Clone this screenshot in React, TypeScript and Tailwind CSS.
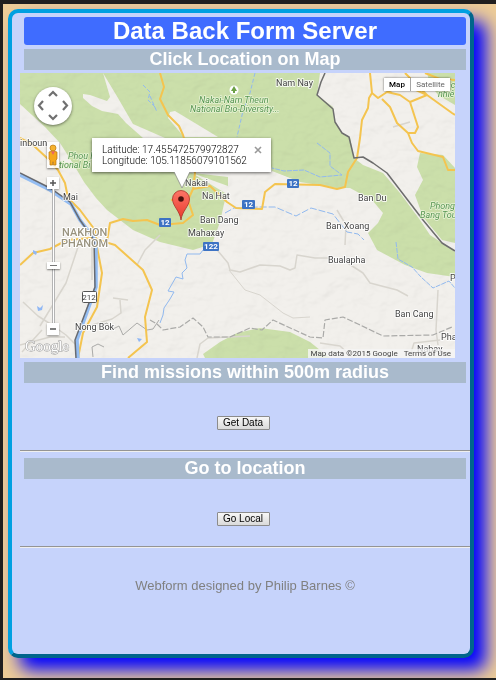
import type { ReactNode } from "react";

const places: { name: string; x: number; y: number }[] = [
  { name: "Nam Nay", x: 276, y: 86 },
  { name: "inboun", x: 20, y: 146 },
  { name: "Mai", x: 63, y: 200 },
  { name: "Nakai", x: 185, y: 186 },
  { name: "Na Hat", x: 202, y: 199 },
  { name: "Ban Dang", x: 200, y: 223 },
  { name: "Mahaxay", x: 188, y: 236 },
  { name: "Ban Du", x: 358, y: 201 },
  { name: "Ban Xoang", x: 326, y: 229 },
  { name: "Bualapha", x: 328, y: 263 },
  { name: "Ban Cang", x: 395, y: 317 },
  { name: "Nong Bok", x: 75, y: 330 },
  { name: "Pha", x: 441, y: 340 },
  { name: "P", x: 450, y: 281 },
  { name: "Nabay", x: 417, y: 352 },
];

const parks: { name: string; x: number; y: number }[] = [
  { name: "Nakai-Nam Theun", x: 199, y: 103 },
  { name: "National Bio-Diversity...", x: 190, y: 112 },
  { name: "Phou H", x: 68, y: 159 },
  { name: "tional Bi", x: 59, y: 168 },
  { name: "ác", x: 446, y: 88 },
  { name: "nhiê", x: 438, y: 97 },
  { name: "Phong", x: 430, y: 209 },
  { name: "Bang Tou", x: 420, y: 218 },
];

const shields: { name: string; x: number; y: number; w: number }[] = [
  { name: "12", x: 159, y: 218, w: 12 },
  { name: "12", x: 242, y: 200, w: 13 },
  { name: "12", x: 287, y: 179, w: 12 },
  { name: "122", x: 203, y: 242, w: 16 },
];

function MapDrawing() {
  return (
    <svg
      className="absolute inset-0 h-full w-full"
      viewBox="20 73 435 285"
      preserveAspectRatio="xMinYMin slice"
      role="img"
      aria-label="Map of Nakhon Phanom and Nakai"
    >
      <defs>
        <filter id="relief" x="0" y="0" width="100%" height="100%">
          <feTurbulence type="fractalNoise" baseFrequency="0.05 0.07" numOctaves="3" seed="8" result="n" />
          <feDiffuseLighting in="n" surfaceScale="4" lightingColor="#ffffff" result="l">
            <feDistantLight azimuth="225" elevation="72" />
          </feDiffuseLighting>
          <feComposite in="l" in2="SourceGraphic" operator="in" />
        </filter>
        <linearGradient id="pin" x1="0" y1="0" x2="0" y2="1">
          <stop offset="0" stopColor="#fd7567" />
          <stop offset="1" stopColor="#e8392c" />
        </linearGradient>
      </defs>
      <rect x="20" y="73" width="435" height="285" fill="#f2f0ec" />
      <g fill="#cbdfaa">
        <path d="M20 73H320L317 95 333 107 335 122 342 133 350 137 354 158 363 165 383 173 400 193 420 220 430 235 442 243 455 252V277L427 273 405 265 377 250 368 233 378 223 383 213 372 200 350 188 337 188 300 182 270 171 228 172 228 190 224 204 220 222 212 244 193 250 160 242 133 230 107 210 96 198 84 182 74 165 60 143 45 127 20 104Z" />
        <path d="M455 168 443 155 420 153 417 167 423 180 415 195 423 217 442 240 455 243Z" />
        <path d="M203 354 220 342 237 333 260 328 290 332 310 342 330 358H205Z" />
        <path d="M427 73 455 73V105L438 95 430 84Z" />
      </g>
      <g fill="#f2f0ec">
        <path d="M103 73 110 97 107 101 90 95 83 94 83 98 92 106 102 111 118 114 126 123 143 138H165L133 124 118 98Z" />
        <path d="M170 112 175 111 218 137H184L168 118Z" />
        <path d="M92 138H265L272 171 300 182 262 184 228 177 193 173 170 172 110 170 92 150Z" />
        <path d="M192 173 228 186 240 174 262 178 262 190 230 196Z" />
      </g>
      <rect x="20" y="73" width="435" height="285" filter="url(#relief)" opacity="0.15" style={{ mixBlendMode: "multiply" }} />

      <g fill="none" stroke="#d8d5ce" strokeWidth="1.5" strokeLinejoin="round">
        <path d="M213 245 228 263 230 270 240 272 260 265 280 266 290 270 295 268 297 255 315 258 328 258 343 260 363 273 370 283 397 290 408 296" />
        <path d="M229 270 245 290 260 295 283 313 293 318 310 317" strokeWidth="1" />
        <path d="M23 302 38 316 52 325 66 335 75 344M42 330 22 352M40 326 66 283 80 241M20 345 50 337 65 337" />
        <path d="M92 325 112 319 121 313 120 300M113 298 128 300M137 265 145 250 160 235M197 358 200 344 208 338 250 336M438 290 436 330 438 345M92 238V280" />
        <path d="M393 127 410 122M320 343 340 346 353 358M345 245 346 225 337 210M410 356 414 343 440 340" />
      </g>
      <g fill="none" stroke="#aaaaa8" strokeWidth="1" strokeLinejoin="round">
        <path d="M93 357 92 347 98 344 104 347M99 326 107 323 111 330 119 326 123 335 130 329 137 323 147 330 153 329 159 320" />
        <path d="M150 320 157 324 163 330 180 327 193 318 203 327 208 337 230 337 250 328 262 330 273 320 286 326 310 337 323 338 325 320 343 317 358 324 383 336 433 335 452 327" strokeDasharray="6 2" strokeWidth="1.2" />
      </g>
      <g fill="none" stroke="#91b9ef" strokeWidth="1" strokeLinejoin="round">
        <path d="M203 250 200 254 187 254 185 260 187 268 182 273 183 279 176 277 168 291 174 292 170 299 164 308 163 315 160 323" />
        <path d="M225 213 234 208 243 208 258 207 275 207 296 216 311 208 333 214 347 232 358 234 364 240" strokeDasharray="7 2" />
        <path d="M396 242 398 259 412 267 421 277 433 288 449 281 455 288M317 143 330 153 330 166 342 175 320 177 304 170 284 171 272 168" strokeDasharray="5 1" />
        <path d="M143 85 150 92 148 100 155 107M255 73 250 93 243 111 237 137M150 96 157 112" strokeDasharray="4 2" />
      </g>
      <g fill="none" stroke="#f4c44f" strokeWidth="2" strokeLinejoin="round">
        <path d="M160 73 164 87 160 99 168 115 179 126 183 135 195 173 193 189 210 186 227 202 236 208 262 209 265 192 275 184 320 185 337 189 345 187 348 172 357 158 360 138 362 120 368 108 369 98 372 93 370 73" />
        <path d="M372 93 378 98 387 92 400 95 410 102 418 127 415 133 408 133 397 123 390 107 382 99M387 92 405 85 427 95 405 73M410 102 427 95 452 113 455 115M408 133 412 143 418 151 443 157 448 170H455" />
        <path d="M20 138 33 145 47 158 58 170 65 183 68 198 80 210 95 230 97 247 102 273 97 307 83 333 78 358" />
        <path d="M20 265 33 253 50 249 67 240 92 238 115 245 143 270 152 290 145 317 147 342 128 358M107 241 110 223 123 219 133 221 147 220 160 225 183 223 193 215 188 200 171 200M188 200 193 189" />
        <path d="M425 73 440 79 455 80" />
      </g>
      <path d="M20 175 50 190 71 204 80 220 96 241V287L77 340 78 358" fill="none" stroke="#94bdf2" strokeWidth="3.5" />
      <path d="M20 173 50 188 70 202 80 220 94 240 95 287 75 340 76 358" fill="none" stroke="#676a70" strokeWidth="1.5" />
      <path d="M325 73 321 82 317 95 333 109 335 122 342 133 349 137 354 158 363 157 373 163 387 173 423 220 442 243 455 251" fill="none" stroke="#6d6d6d" strokeWidth="1.5" strokeLinejoin="round" />
      <g fill="#8fb7f5">
        <path d="M33 250 37 252 36 255 33 253ZM37 306 40 308 43 305 42 310 38 311ZM137 338 142 339 139 342Z" />
      </g>

      <g fontFamily="Roboto, sans-serif" fontSize="9" strokeLinejoin="round" paintOrder="stroke">
        <g fill="#444444" stroke="#ffffff" strokeOpacity="0.8" strokeWidth="2">
          {places.map((p) => (
            <text key={p.name} x={p.x} y={p.y}>{p.name}</text>
          ))}
        </g>
        <g fill="#55944f" stroke="#eaf4d8" strokeWidth="1.5" fontStyle="italic">
          {parks.map((p) => (
            <text key={p.name} x={p.x} y={p.y}>{p.name}</text>
          ))}
        </g>
        <g fill="#99937f" stroke="#ffffff" strokeWidth="2" fontSize="11" fontWeight="500">
          <text x="62" y="236">NAKHON</text>
          <text x="61" y="247">PHANOM</text>
        </g>
        <text x="25" y="351" fontFamily="Liberation Serif, serif" fontSize="15" fill="#ffffff" stroke="#999999" strokeWidth="1">Google</text>
      </g>
      <circle cx="234" cy="90" r="4.5" fill="#ffffff" />
      <path d="M234 86 237 91H235V93H233V91H231Z" fill="#6ba045" />
      {shields.map((s) => (
        <g key={s.x}>
          <rect x={s.x} y={s.y} width={s.w} height="9" rx="1" fill="#3d73c4" />
          <text x={s.x + s.w / 2} y={s.y + 7} textAnchor="middle" fill="#ffffff" fontFamily="Roboto, sans-serif" fontSize="8" fontWeight="700">{s.name}</text>
        </g>
      ))}
      <rect x="82.5" y="291.5" width="14" height="11" rx="1" fill="#ffffff" stroke="#555555" />
      <text x="89" y="300" textAnchor="middle" fill="#444444" fontFamily="Roboto, sans-serif" fontSize="8">212</text>

      <path d="M181 220C180 211 172.5 206 172.5 199A8.5 8.5 0 0 1 189.5 199C189.5 206 182 211 181 220Z" fill="url(#pin)" stroke="#a83228" strokeWidth="0.8" />
      <circle cx="181" cy="199" r="2.8" fill="#4b100c" />
    </svg>
  );
}

function InfoWindow() {
  return (
    <div className="absolute top-[65px] left-[72px] flex h-[34px] w-[179px] items-start justify-between bg-white pt-1.5 pr-[9px] pl-2.5 shadow-[0_1px_3px_rgba(0,0,0,0.6)]">
      <p className="font-[Roboto,sans-serif] text-[10px] leading-[11px] font-light text-black">
        Latitude: 17.455472579972827
        <br />
        Longitude: 105.11856079101562
      </p>
      <button aria-label="Close" className="mt-0.5 h-2 w-2">
        <svg viewBox="0 0 8 8" className="h-2 w-2" fill="none" stroke="#999999" strokeWidth="1.6">
          <path d="M1 1 7 7M7 1 1 7" />
        </svg>
      </button>
      <svg viewBox="0 0 16 18" className="absolute top-[33px] left-[82px] h-[18px] w-4">
        <path d="M0 0 8 17 16 0Z" fill="#ffffff" />
        <path d="M0 1 8 17 16 1" fill="none" stroke="#8f8f8f" strokeWidth="0.8" />
      </svg>
    </div>
  );
}

function MapControls() {
  return (
    <>
      <button aria-label="Pan" className="absolute top-3.5 left-3.5 h-[38px] w-[38px] rounded-full bg-white shadow-[0_1px_3px_rgba(0,0,0,0.5)]">
        <svg viewBox="0 0 38 38" className="h-full w-full" fill="none" stroke="#707070" strokeWidth="2.2">
          <path d="M15 9 19 5 23 9M15 28 19 32 23 28M9 14 5 18.5 9 23M29 14 33 18.5 29 23" />
        </svg>
      </button>
      <div className="absolute top-[69px] left-[26px] flex w-3.5 flex-col items-center">
        <button aria-label="Street View" className="h-[26px] w-3 bg-white/80 shadow-[0_1px_2px_rgba(0,0,0,0.5)]">
          <svg viewBox="0 0 12 26" className="h-full w-full">
            <circle cx="6" cy="6" r="3" fill="#f6b22c" stroke="#b97510" strokeWidth="0.7" />
            <path d="M2 10Q6 8 10 10V17L9 18V23H6.5V20H5.5V23H3V18L2 17Z" fill="#f5a81d" stroke="#b97510" strokeWidth="0.7" />
            <path d="M4 9.5H8L6 13Z" fill="#e8646a" />
          </svg>
        </button>
        <button aria-label="Zoom in" className="mt-[9px] h-3 w-3 bg-white shadow-[0_1px_2px_rgba(0,0,0,0.4)]">
          <svg viewBox="0 0 12 12" className="h-full w-full" stroke="#555555" strokeWidth="1.5"><path d="M3 6H9M6 3V9" /></svg>
        </button>
        <div className="flex h-[134px] w-[3px] flex-col items-center border-x border-[#b4b4b4] bg-white pt-[73px]">
          <div className="flex h-[7px] w-[13px] shrink-0 items-center justify-center bg-white shadow-[0_1px_2px_rgba(0,0,0,0.5)]">
            <div className="h-px w-[7px] bg-[#777777]" />
          </div>
        </div>
        <button aria-label="Zoom out" className="h-3 w-3 bg-white shadow-[0_1px_2px_rgba(0,0,0,0.4)]">
          <svg viewBox="0 0 12 12" className="h-full w-full" stroke="#555555" strokeWidth="1.5"><path d="M3 6H9" /></svg>
        </button>
      </div>
      <div className="absolute top-[5px] right-[5px] flex h-[13px] bg-white font-[Roboto,sans-serif] text-[8px] leading-[13px] shadow-[0_0_2px_rgba(0,0,0,0.6)]">
        <button className="w-[27px] border-r border-[#a5a5a5] font-medium text-black">Map</button>
        <button className="w-[39px] text-[#666666]">Satellite</button>
      </div>
      <div className="absolute right-0 bottom-0 flex h-[9px] gap-1.5 bg-[#f5f5f5]/80 pr-1 pl-[3px] font-[Roboto,sans-serif] text-[8px] leading-[9px] text-[#444444]">
        <span>Map data ©2015 Google</span>
        <a href="#terms">Terms of Use</a>
      </div>
    </>
  );
}

function SectionHeading({ children }: { children: ReactNode }) {
  return <h2 className="mx-1 h-[21px] bg-[#a9bacc] text-center text-lg leading-[21px] font-bold text-white">{children}</h2>;
}

function ActionRow({ label }: { label: string }) {
  return (
    <>
      <div className="mr-1 flex justify-center pt-[33px] pb-5">
        <button className="h-3.5 w-[53px] rounded-[1px] border border-[#8c8c8c] bg-linear-to-b from-[#f7f7f7] to-[#dadada] text-[10px] leading-3 text-black">{label}</button>
      </div>
      <hr className="border-t border-b border-t-[#949494] border-b-[#efefef]" />
    </>
  );
}

export default function App() {
  return (
    <div className="flex min-h-screen bg-[#201f1f] pt-1 pb-0.5 pl-[3px] font-['Liberation_Sans',Arial,sans-serif]">
      <div className="flex flex-1 overflow-hidden bg-[#edcc97] pt-[5px] pr-[22px] pb-5 pl-[5px]">
        <main className="min-w-0 flex-1 rounded-[10px] border-4 border-t-[#00a0e1] border-r-[#00658c] border-b-[#00658c] border-l-[#00a0e1] bg-[#c6d3fb] pt-1 pl-2 shadow-[12px_12px_17px_#0000ff]">
          <h1 className="mx-1 mb-1 h-7 rounded-[3px] bg-[#3f6cff] text-center text-2xl leading-7 font-bold text-white">Data Back Form Server</h1>
          <SectionHeading>Click Location on Map</SectionHeading>
          <div className="relative mt-[3px] mr-[15px] mb-1 h-[285px] overflow-hidden">
            <MapDrawing />
            <InfoWindow />
            <MapControls />
          </div>
          <SectionHeading>Find missions within 500m radius</SectionHeading>
          <ActionRow label="Get Data" />
          <div className="pt-1.5">
            <SectionHeading>Go to location</SectionHeading>
            <ActionRow label="Go Local" />
          </div>
          <footer className="pt-[30px] text-center text-[13px] leading-4 text-[#808080]">Webform designed by Philip Barnes ©</footer>
        </main>
      </div>
    </div>
  );
}
